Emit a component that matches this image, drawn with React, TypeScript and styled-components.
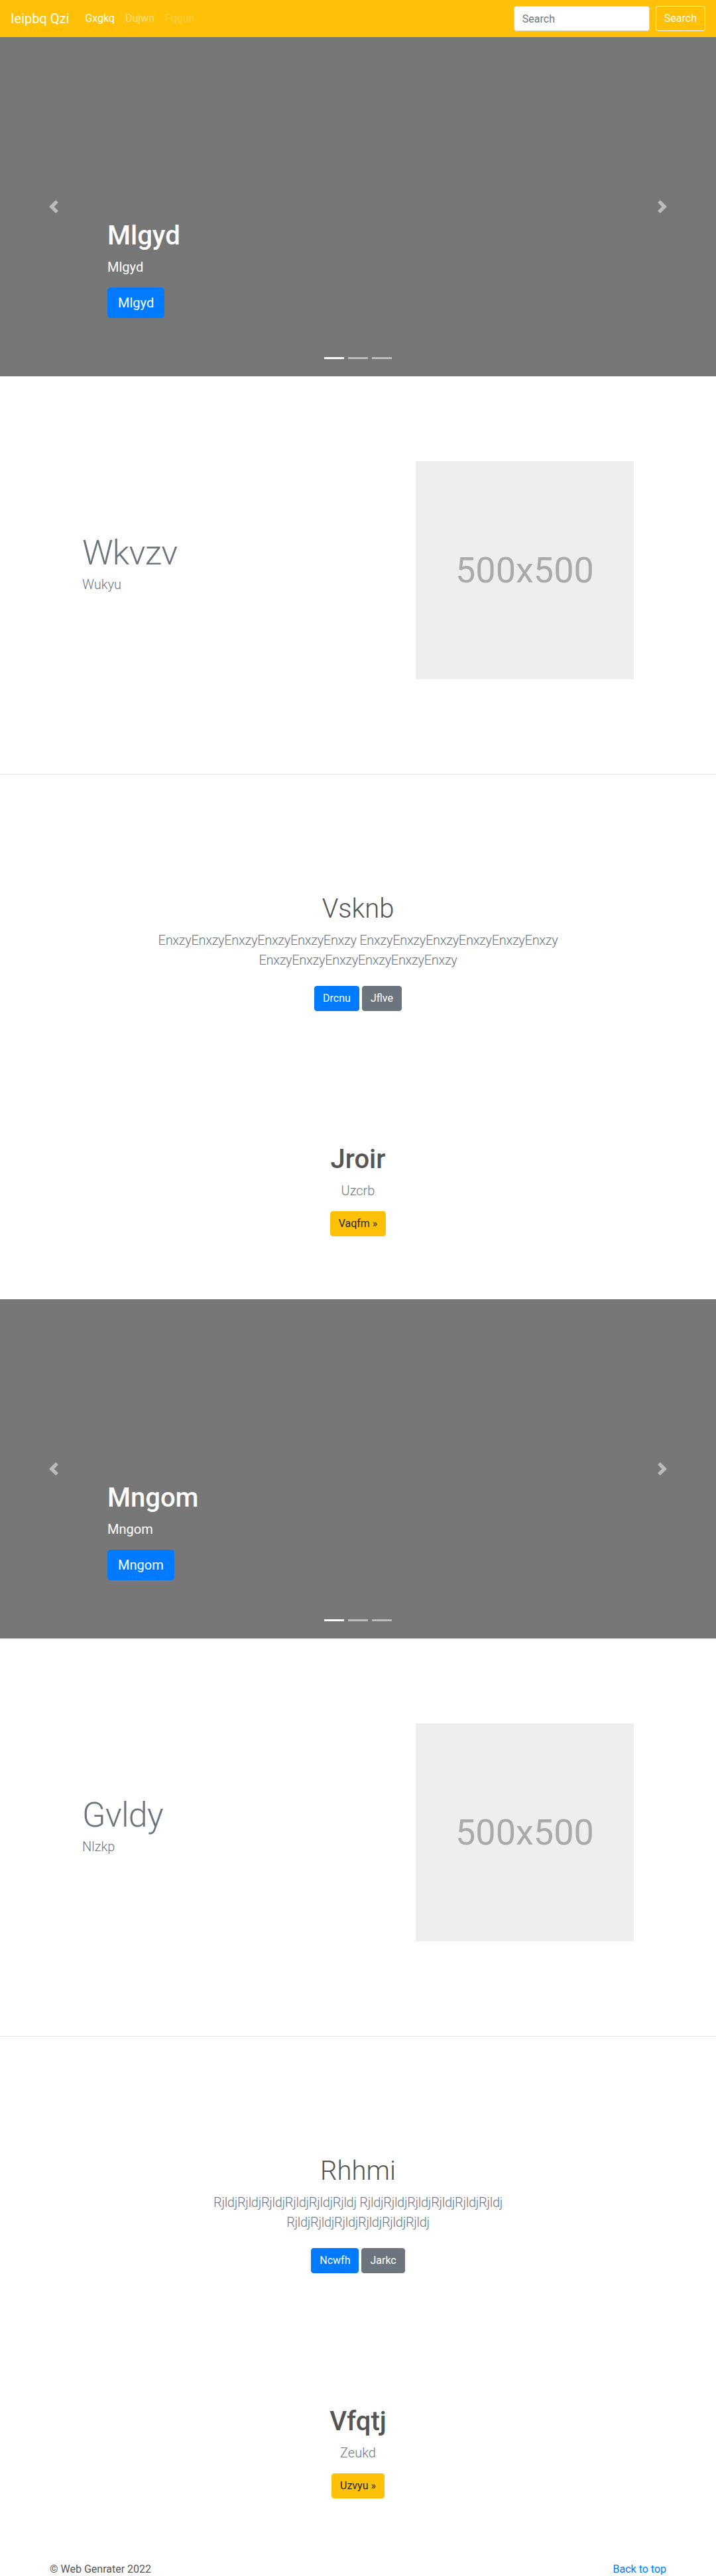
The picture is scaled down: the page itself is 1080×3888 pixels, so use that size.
import * as React from 'react';
import styled, { createGlobalStyle } from 'styled-components';

const GlobalStyle = createGlobalStyle`
    *, *::before, *::after {
        box-sizing: border-box;
    }

    body {
        margin: 0;
        font-family: "Segoe UI", Roboto, "Helvetica Neue", Arial, "Noto Sans", sans-serif;
        font-size: 16px;
        line-height: 1.5;
        color: #212529;
        background-color: #ffffff;
    }
`;

const Navbar = styled.nav`
    display: flex;
    align-items: center;
    justify-content: space-between;
    height: 56px;
    padding: 8px 16px;
    background-color: #ffc107;
`;

const NavLeft = styled.div`
    display: flex;
    align-items: center;
`;

const Brand = styled.a`
    margin-right: 16px;
    font-size: 20px;
    line-height: 30px;
    color: #ffffff;
    text-decoration: none;
`;

const NavList = styled.ul`
    display: flex;
    margin: 0;
    padding: 0;
    list-style: none;
`;

const linkColors = {
    active: '#ffffff',
    normal: 'rgba(255, 255, 255, 0.5)',
    disabled: 'rgba(255, 255, 255, 0.25)',
};

const NavLink = styled.a<{ $state: keyof typeof linkColors }>`
    display: block;
    padding: 8px;
    line-height: 24px;
    color: ${(p) => linkColors[p.$state]};
    text-decoration: none;
`;

const SearchForm = styled.form`
    display: flex;
    align-items: center;
    gap: 9px;
`;

const SearchInput = styled.input`
    width: 205px;
    height: 38px;
    padding: 6px 12px;
    font-family: inherit;
    font-size: 16px;
    color: #495057;
    background-color: #ffffff;
    border: 1px solid #ced4da;
    border-radius: 4px;

    &::placeholder {
        color: #6c757d;
    }
`;

const OutlineButton = styled.button`
    height: 38px;
    padding: 6px 12px;
    font-family: inherit;
    font-size: 16px;
    line-height: 24px;
    color: #f8f9fa;
    background-color: transparent;
    border: 1px solid #f8f9fa;
    border-radius: 4px;
`;

const Carousel = styled.div`
    position: relative;
    height: 512px;
    overflow: hidden;
    background-color: #777777;
`;

const Caption = styled.div`
    position: absolute;
    left: 15%;
    right: 15%;
    bottom: 52px;
    z-index: 10;
    padding-bottom: 20px;
    color: #ffffff;
    text-align: left;
`;

const CaptionTitle = styled.h1`
    margin: 0 0 8px;
    font-size: 40px;
    font-weight: 500;
    line-height: 1.2;
`;

const CaptionText = styled.p`
    margin: 0 0 16px;
    font-size: 20px;
    line-height: 30px;
`;

const ButtonLine = styled.p`
    margin: 0 0 16px;
`;

const LargeButton = styled.a`
    display: inline-block;
    padding: 8px 16px;
    font-size: 20px;
    line-height: 30px;
    color: #ffffff;
    background-color: #007bff;
    border-radius: 4.8px;
    text-decoration: none;
`;

const Control = styled.a<{ $side: 'left' | 'right' }>`
    position: absolute;
    top: 0;
    bottom: 0;
    ${(p) => p.$side}: 0;
    z-index: 1;
    display: flex;
    align-items: center;
    justify-content: center;
    width: 15%;
    opacity: 0.5;
`;

const Indicators = styled.ol`
    position: absolute;
    left: 0;
    right: 0;
    bottom: 0;
    z-index: 15;
    display: flex;
    justify-content: center;
    margin: 0 15% 26px;
    padding: 0;
    list-style: none;
`;

const Indicator = styled.li<{ $active?: boolean }>`
    width: 30px;
    height: 3px;
    margin: 0 3px;
    background-color: #ffffff;
    opacity: ${(p) => (p.$active ? 1 : 0.5)};
`;

const FeatureSection = styled.section`
    padding: 128px 0 143px;
`;

const FeatureRow = styled.div`
    display: flex;
    align-items: center;
    max-width: 862px;
    margin: 0 auto;
`;

const FeatureText = styled.div`
    flex: 0 0 58.333%;
    padding: 0 15px;
`;

const FeatureMedia = styled.div`
    flex: 0 0 41.667%;
    padding: 0 15px;
`;

const FeatureHeading = styled.h2`
    margin: 0 0 6px;
    font-size: 52px;
    font-weight: 300;
    line-height: 1;
    letter-spacing: -0.8px;
    color: #6c757d;
`;

const Lead = styled.p`
    margin: 0 0 16px;
    font-size: 20px;
    font-weight: 300;
    line-height: 30px;
    color: #6c757d;
`;

const Placeholder = styled.div`
    display: flex;
    align-items: center;
    justify-content: center;
    width: 100%;
    aspect-ratio: 1 / 1;
    font-size: 54px;
    color: #aaaaaa;
    background-color: #eeeeee;
`;

const Divider = styled.hr`
    margin: 0;
    border: 0;
    border-top: 1px solid rgba(0, 0, 0, 0.1);
`;

const Jumbo = styled.section`
    padding-top: 179px;
    text-align: center;
`;

const JumboInner = styled.div`
    max-width: 640px;
    margin: 0 auto;
`;

const JumboHeading = styled.h1`
    margin: 0 0 8px;
    font-size: 40px;
    font-weight: 300;
    line-height: 1.2;
    color: #555555;
`;

const JumboLead = styled(Lead)`
    letter-spacing: -0.3px;
`;

const ButtonRow = styled.p`
    display: flex;
    justify-content: center;
    gap: 4px;
    margin: 0;
`;

const buttonColors = {
    primary: { bg: '#007bff', fg: '#ffffff' },
    secondary: { bg: '#6c757d', fg: '#ffffff' },
    warning: { bg: '#ffc107', fg: '#212529' },
};

const Button = styled.a<{ $variant: keyof typeof buttonColors }>`
    display: inline-block;
    margin: 8px 0;
    padding: 6px 12px;
    font-size: 16px;
    line-height: 24px;
    color: ${(p) => buttonColors[p.$variant].fg};
    background-color: ${(p) => buttonColors[p.$variant].bg};
    border: 1px solid ${(p) => buttonColors[p.$variant].bg};
    border-radius: 4px;
    text-decoration: none;
`;

const Promo = styled.section`
    padding: 192px 0 95px;
    text-align: center;
`;

const PromoHeading = styled.h1`
    margin: 0 0 8px;
    font-size: 40px;
    font-weight: 500;
    line-height: 1.2;
    color: #555555;
`;

const PromoButton = styled(Button)`
    margin: 0;
`;

const Footer = styled.footer`
    display: flex;
    justify-content: space-between;
    max-width: 960px;
    margin: 0 auto;
    padding: 0 15px;
    color: #555555;
`;

const FooterText = styled.p`
    margin: 0 0 16px;
`;

const FooterLink = styled.a`
    color: #007bff;
    text-decoration: none;
`;

function Chevron({ dir }: { dir: 'prev' | 'next' }) {
    const d =
        dir === 'prev'
            ? 'M5.25 0l-4 4 4 4 1.5-1.5L4.25 4l2.5-2.5L5.25 0z'
            : 'M2.75 0l-1.5 1.5L3.75 4l-2.5 2.5L2.75 8l4-4-4-4z';
    return (
        <svg width="20" height="20" viewBox="0 0 8 8" fill="#ffffff">
            <path d={d} />
        </svg>
    );
}

function Slide({ title }: { title: string }) {
    return (
        <Carousel>
            <Indicators>
                <Indicator $active />
                <Indicator />
                <Indicator />
            </Indicators>
            <Caption>
                <CaptionTitle>{title}</CaptionTitle>
                <CaptionText>{title}</CaptionText>
                <ButtonLine>
                    <LargeButton href="#">{title}</LargeButton>
                </ButtonLine>
            </Caption>
            <Control $side="left" href="#">
                <Chevron dir="prev" />
            </Control>
            <Control $side="right" href="#">
                <Chevron dir="next" />
            </Control>
        </Carousel>
    );
}

function Featurette({ heading, text }: { heading: string; text: string }) {
    return (
        <>
            <FeatureSection>
                <FeatureRow>
                    <FeatureText>
                        <FeatureHeading>{heading}</FeatureHeading>
                        <Lead>{text}</Lead>
                    </FeatureText>
                    <FeatureMedia>
                        <Placeholder>500x500</Placeholder>
                    </FeatureMedia>
                </FeatureRow>
            </FeatureSection>
            <Divider />
        </>
    );
}

function Intro({ heading, word, primary, secondary }: { heading: string; word: string; primary: string; secondary: string }) {
    const chunk = word.repeat(6);
    return (
        <Jumbo>
            <JumboInner>
                <JumboHeading>{heading}</JumboHeading>
                <JumboLead>{`${chunk} ${chunk} ${chunk}`}</JumboLead>
                <ButtonRow>
                    <Button $variant="primary" href="#">{primary}</Button>
                    <Button $variant="secondary" href="#">{secondary}</Button>
                </ButtonRow>
            </JumboInner>
        </Jumbo>
    );
}

function Callout({ heading, text, action }: { heading: string; text: string; action: string }) {
    return (
        <Promo>
            <PromoHeading>{heading}</PromoHeading>
            <Lead>{text}</Lead>
            <PromoButton $variant="warning" href="#">{action} »</PromoButton>
        </Promo>
    );
}

export default function App() {
    return (
        <>
            <GlobalStyle />
            <Navbar>
                <NavLeft>
                    <Brand href="#">Ieipbq Qzi</Brand>
                    <NavList>
                        <li><NavLink $state="active" href="#">Gxgkq</NavLink></li>
                        <li><NavLink $state="normal" href="#">Dujwn</NavLink></li>
                        <li><NavLink $state="disabled" href="#">Fqgun</NavLink></li>
                    </NavList>
                </NavLeft>
                <SearchForm onSubmit={(e) => e.preventDefault()}>
                    <SearchInput type="text" placeholder="Search" />
                    <OutlineButton type="submit">Search</OutlineButton>
                </SearchForm>
            </Navbar>

            <Slide title="Mlgyd" />
            <Featurette heading="Wkvzv" text="Wukyu" />
            <Intro heading="Vsknb" word="Enxzy" primary="Drcnu" secondary="Jflve" />
            <Callout heading="Jroir" text="Uzcrb" action="Vaqfm" />

            <Slide title="Mngom" />
            <Featurette heading="Gvldy" text="Nlzkp" />
            <Intro heading="Rhhmi" word="Rjldj" primary="Ncwfh" secondary="Jarkc" />
            <Callout heading="Vfqtj" text="Zeukd" action="Uzvyu" />

            <Footer>
                <FooterText>© Web Genrater 2022</FooterText>
                <FooterText>
                    <FooterLink href="#">Back to top</FooterLink>
                </FooterText>
            </Footer>
        </>
    );
}
